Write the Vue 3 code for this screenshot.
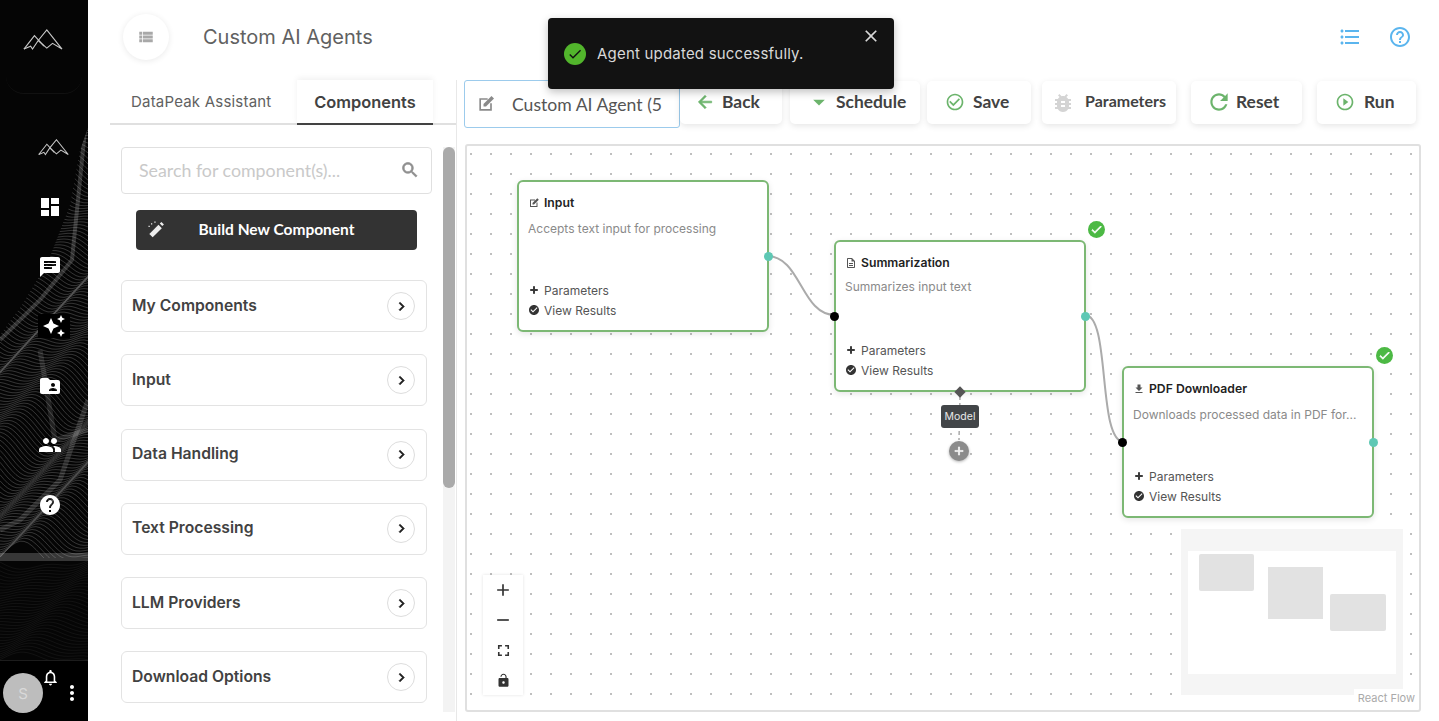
<script setup>
const icons = {
  dashboard: "M3 13h8V3H3v10zm0 8h8v-6H3v6zm10 0h8V11h-8v10zm0-18v6h8V3h-8z",
  chat: "M20 2H4c-1.1 0-2 .9-2 2v18l4-4h14c1.1 0 2-.9 2-2V4c0-1.1-.9-2-2-2zM6 9h12v2H6V9zm8 5H6v-2h8v2zm4-6H6V6h12v2z",
  stars: "M19 9l1.25-2.75L23 5l-2.75-1.25L19 1l-1.25 2.75L15 5l2.75 1.25L19 9zm-7.5.5L9 4 6.5 9.5 1 12l5.5 2.5L9 20l2.5-5.5L17 12l-5.5-2.5zM19 15l-1.25 2.75L15 19l2.75 1.25L19 23l1.25-2.75L23 19l-2.75-1.25L19 15z",
  folder: "M20 6h-8l-2-2H4c-1.1 0-1.99.9-1.99 2L2 18c0 1.1.9 2 2 2h16c1.1 0 2-.9 2-2V8c0-1.1-.9-2-2-2zm-5 3c1.1 0 2 .9 2 2s-.9 2-2 2-2-.9-2-2 .9-2 2-2zm4 8h-8v-1c0-1.33 2.67-2 4-2s4 .67 4 2v1z",
  people: "M16 11c1.66 0 2.99-1.34 2.99-3S17.66 5 16 5c-1.66 0-3 1.34-3 3s1.34 3 3 3zm-8 0c1.66 0 2.99-1.34 2.99-3S9.66 5 8 5C6.34 5 5 6.34 5 8s1.34 3 3 3zm0 2c-2.33 0-7 1.17-7 3.5V19h14v-2.5c0-2.33-4.67-3.5-7-3.5zm8 0c-.29 0-.62.02-.97.05 1.16.84 1.97 1.97 1.97 3.45V19h6v-2.5c0-2.33-4.67-3.5-7-3.5z",
  help: "M12 2C6.48 2 2 6.48 2 12s4.48 10 10 10 10-4.48 10-10S17.52 2 12 2zm1 17h-2v-2h2v2zm2.07-7.75l-.9.92C13.45 12.9 13 13.5 13 15h-2v-.5c0-1.1.45-2.1 1.17-2.83l1.24-1.26c.37-.36.59-.86.59-1.41 0-1.1-.9-2-2-2s-2 .9-2 2H8c0-2.21 1.79-4 4-4s4 1.79 4 4c0 .88-.36 1.68-.93 2.25z",
  helpOutline: "M11 18h2v-2h-2v2zm1-16C6.48 2 2 6.48 2 12s4.48 10 10 10 10-4.48 10-10S17.52 2 12 2zm0 18c-4.41 0-8-3.59-8-8s3.59-8 8-8 8 3.59 8 8-3.59 8-8 8zm0-14c-2.21 0-4 1.79-4 4h2c0-1.1.9-2 2-2s2 .9 2 2c0 2-3 1.75-3 5h2c0-2.25 3-2.5 3-5 0-2.21-1.79-4-4-4z",
  bullets: "M4 10.5c-.83 0-1.5.67-1.5 1.5s.67 1.5 1.5 1.5 1.5-.67 1.5-1.5-.67-1.5-1.5-1.5zm0-6c-.83 0-1.5.67-1.5 1.5S3.17 7.5 4 7.5 5.5 6.83 5.5 6 4.83 4.5 4 4.5zm0 12c-.83 0-1.5.68-1.5 1.5s.68 1.5 1.5 1.5 1.5-.68 1.5-1.5-.67-1.5-1.5-1.5zM7 19h14v-2H7v2zm0-6h14v-2H7v2zm0-8v2h14V5H7z",
  viewList: "M3 14h4v-4H3v4zm0 5h4v-4H3v4zM3 9h4V5H3v4zm5 5h13v-4H8v4zm0 5h13v-4H8v4zM8 5v4h13V5H8z",
  edit: "M4 5h10v2H6v11h11v-7h2v9H4zM18.6 2.4l3 3L12 15H9v-3z",
  back: "M20 11H7.83l5.59-5.59L12 4l-8 8 8 8 1.41-1.41L7.83 13H20v-2z",
  drop: "M7 10l5 5 5-5z",
  saveCheck: "M16.59 7.58L10 14.17l-3.59-3.58L5 12l5 5 8-8zM12 2C6.48 2 2 6.48 2 12s4.48 10 10 10 10-4.48 10-10S17.52 2 12 2zm0 18c-4.42 0-8-3.58-8-8s3.58-8 8-8 8 3.58 8 8-3.58 8-8 8z",
  bug: "M20 8h-2.81c-.45-.78-1.07-1.45-1.82-1.96L17 4.41 15.59 3l-2.17 2.17C12.96 5.06 12.49 5 12 5c-.49 0-.96.06-1.41.17L8.41 3 7 4.41l1.62 1.63C7.88 6.55 7.26 7.22 6.81 8H4v2h2.09c-.05.33-.09.66-.09 1v1H4v2h2v1c0 .34.04.67.09 1H4v2h2.81c1.04 1.79 2.97 3 5.19 3s4.15-1.21 5.19-3H20v-2h-2.09c.05-.33.09-.66.09-1v-1h2v-2h-2v-1c0-.34-.04-.67-.09-1H20V8zm-6 8h-4v-2h4v2zm0-4h-4v-2h4v2z",
  reset: "M17.65 6.35C16.2 4.9 14.21 4 12 4c-4.42 0-7.99 3.58-7.99 8s3.57 8 7.99 8c3.73 0 6.84-2.55 7.73-6h-2.08c-.82 2.33-3.04 4-5.65 4-3.31 0-6-2.69-6-6s2.69-6 6-6c1.66 0 3.14.69 4.22 1.78L13 11h7V4l-2.35 2.35z",
  play: "M10 16.5l6-4.5-6-4.5v9zM12 2C6.48 2 2 6.48 2 12s4.48 10 10 10 10-4.48 10-10S17.52 2 12 2zm0 18c-4.41 0-8-3.59-8-8s3.59-8 8-8 8 3.59 8 8-3.59 8-8 8z",
  search: "M15.5 14h-.79l-.28-.27C15.41 12.59 16 11.11 16 9.5 16 5.91 13.09 3 9.5 3S3 5.91 3 9.5 5.91 16 9.5 16c1.61 0 3.09-.59 4.23-1.57l.27.28v.79l5 4.99L20.49 19l-4.99-5zm-6 0C7.01 14 5 11.99 5 9.5S7.01 5 9.5 5 14 7.01 14 9.5 11.99 14 9.5 14z",
  chevron: "M10 6L8.59 7.41 13.17 12l-4.58 4.59L10 18l6-6z",
  close: "M19 6.41L17.59 5 12 10.59 6.41 5 5 6.41 10.59 12 5 17.59 6.41 19 12 13.41 17.59 19 19 17.59 13.41 12z",
  check: "M9 16.17L4.83 12l-1.42 1.41L9 19 21 7l-1.41-1.41z",
  add: "M19 13h-6v6h-2v-6H5v-2h6V5h2v6h6v2z",
  remove: "M19 13H5v-2h14v2z",
  fullscreen: "M7 14H5v5h5v-2H7v-3zm-2-4h2V7h3V5H5v5zm12 7h-3v2h5v-5h-2v3zM14 5v2h3v3h2V5h-5z",
  lock: "M18 8h-1V6c0-2.76-2.24-5-5-5S7 3.24 7 6h1.9c0-1.71 1.39-3.1 3.1-3.1 1.71 0 3.1 1.39 3.1 3.1v2H6c-1.1 0-2 .9-2 2v10c0 1.1.9 2 2 2h12c1.1 0 2-.9 2-2V10c0-1.1-.9-2-2-2zm-6 9c-1.1 0-2-.9-2-2s.9-2 2-2 2 .9 2 2-.9 2-2 2z",
  bell: "M12 22c1.1 0 2-.9 2-2h-4c0 1.1.9 2 2 2zm6-6v-5c0-3.07-1.63-5.64-4.5-6.32V4c0-.83-.67-1.5-1.5-1.5s-1.5.67-1.5 1.5v.68C7.64 5.36 6 7.92 6 11v5l-2 2v1h16v-1l-2-2zm-2 1H8v-6c0-2.48 1.51-4.5 4-4.5s4 2.02 4 4.5v6z",
  more: "M12 8c1.1 0 2-.9 2-2s-.9-2-2-2-2 .9-2 2 .9 2 2 2zm0 2c-1.1 0-2 .9-2 2s.9 2 2 2 2-.9 2-2-.9-2-2-2zm0 6c-1.1 0-2 .9-2 2s.9 2 2 2 2-.9 2-2-.9-2-2-2z",
  download: "M5 20h14v-2H5v2zM19 9h-4V3H9v6H5l7 7 7-7z",
  doc: "M8 16h8v2H8zm0-4h8v2H8zm6-10H6c-1.1 0-2 .9-2 2v16c0 1.1.89 2 1.99 2H18c1.1 0 2-.9 2-2V8l-6-6zm4 18H6V4h7v5h5v11z",
  verified: "M12 2C6.48 2 2 6.48 2 12s4.48 10 10 10 10-4.48 10-10S17.52 2 12 2zm-2 15l-5-5 1.41-1.41L10 14.17l7.59-7.59L19 8l-9 9z",
};

const navItems = [
  { key: "dashboard", path: icons.dashboard },
  { key: "chat", path: icons.chat },
  { key: "stars", path: icons.stars, active: true },
  { key: "folder", path: icons.folder },
  { key: "people", path: icons.people },
  { key: "help", path: icons.help },
];

const groups = ["My Components", "Input", "Data Handling", "Text Processing", "LLM Providers", "Download Options"];

const actions = [
  { label: "Back", icon: icons.back, cls: "act-back" },
  { label: "Schedule", icon: icons.drop, cls: "act-schedule" },
  { label: "Save", icon: icons.saveCheck, cls: "act-save" },
  { label: "Parameters", icon: icons.bug, cls: "act-params" },
  { label: "Reset", icon: icons.reset, cls: "act-reset" },
  { label: "Run", icon: icons.play, cls: "act-run" },
];

const nodes = [
  { title: "Input", desc: "Accepts text input for processing", icon: icons.edit, cls: "node-input" },
  { title: "Summarization", desc: "Summarizes input text", icon: icons.doc, cls: "node-summary", done: true, model: true },
  { title: "PDF Downloader", desc: "Downloads processed data in PDF for...", icon: icons.download, cls: "node-pdf", done: true },
];

// contour lines for the sidebar artwork
const waveLine = (i, from, step, amp) => {
  const base = from + i * step;
  let d = "";
  for (let x = 0; x <= 88; x += 4) {
    const y = base + amp * Math.sin(x / 24 + i * 0.11) + (amp / 2) * Math.sin(x / 10 + i * 0.27);
    d += (x === 0 ? "M" : "L") + x + " " + y.toFixed(1) + " ";
  }
  return d;
};
const upperWaves = Array.from({ length: 150 }, (_, i) => waveLine(i, 130, 2.9, 14));
const lowerWaves = Array.from({ length: 34 }, (_, i) => waveLine(i, 562, 3, 6));
</script>

<template>
  <div class="app">
    <aside class="sidebar">
      <svg class="art" viewBox="0 0 88 721" width="88" height="721" aria-hidden="true">
        <defs>
          <clipPath id="peak">
            <polygon points="0,335 22,305 48,262 70,205 80,150 88,128 88,558 0,558" />
          </clipPath>
        </defs>
        <g clip-path="url(#peak)" fill="none" stroke="#fff">
          <g stroke-width="0.6" opacity="0.32">
            <path v-for="(d, i) in upperWaves" :key="i" :d="d" />
          </g>
          <path d="M85 130 L72 260 L40 300 L0 340" stroke-width="4" opacity="0.18" />
          <path d="M40 350 L55 440 L88 430" stroke-width="5" opacity="0.12" />
          <path d="M88 400 L60 480 L20 520 L0 530" stroke-width="5" opacity="0.14" />
        </g>
        <rect x="0" y="553" width="88" height="8" fill="#fff" opacity="0.2" />
        <g fill="none" stroke="#fff" stroke-width="0.5" opacity="0.1">
          <path v-for="(d, i) in lowerWaves" :key="i" :d="d" />
        </g>
      </svg>

      <div class="brand">
        <svg class="logo" viewBox="0 0 42 23" width="40" height="22" fill="none" stroke="#c8c8c8" stroke-width="1.200">
          <path d="M1 21L12 7L22 18" />
          <path d="M1 21L8 18L10 21L16 12L25 1L41 21L31 15L25 20L16 12" />
        </svg>
      </div>

      <nav class="nav">
        <div class="nav-item">
          <svg viewBox="0 0 42 23" width="31" height="17" fill="none" stroke="#c8c8c8" stroke-width="1.400">
            <path d="M1 21L12 7L22 18" />
            <path d="M1 21L8 18L10 21L16 12L25 1L41 21L31 15L25 20L16 12" />
          </svg>
        </div>
        <div v-for="item in navItems" :key="item.key" class="nav-item">
          <span :class="['nav-icon', { 'nav-icon-active': item.active }]">
            <svg viewBox="0 0 24 24" width="24" height="24"><path :d="item.path" fill="#fff" /></svg>
          </span>
        </div>
      </nav>

      <div class="user">
        <div class="avatar">S</div>
        <svg class="bell" viewBox="0 0 24 24" width="19" height="19"><path :d="icons.bell" fill="#fff" /></svg>
        <svg class="more" viewBox="0 0 24 24" width="24" height="24"><path :d="icons.more" fill="#fff" /></svg>
      </div>
    </aside>

    <main class="main">
      <header class="header">
        <button class="menu-btn">
          <svg viewBox="0 0 24 24" width="18" height="18"><path :d="icons.viewList" fill="#a8a8a8" /></svg>
        </button>
        <h1 class="page-title">Custom AI Agents</h1>
        <div class="header-icons">
          <svg viewBox="0 0 24 24" width="24" height="24"><path :d="icons.bullets" fill="#5bb5ee" /></svg>
          <svg viewBox="0 0 24 24" width="24" height="24"><path :d="icons.helpOutline" fill="#5bb5ee" /></svg>
        </div>
      </header>

      <div class="content">
        <section class="panel">
          <div class="tabs">
            <div class="tab">DataPeak Assistant</div>
            <div class="tab tab-active">Components</div>
          </div>
          <div class="panel-body">
            <div class="panel-list">
              <div class="search">
                <span>Search for component(s)...</span>
                <svg viewBox="0 0 24 24" width="20" height="20"><path :d="icons.search" fill="#8f8f8f" stroke="#8f8f8f" stroke-width="0.8" /></svg>
              </div>
              <button class="build-btn">
                <svg class="wand" viewBox="0 0 24 24" width="20" height="20">
                  <path d="M8 22l-4-4L15 7l4 4z" fill="#eee" />
                  <path d="M16.5 5.5l2-2 3 3-2 2z" fill="#eee" />
                  <path d="M6 5h1.5v1.5H6zM10 3h1.500v1.500H10zM3 8h1.500v1.500H3z" fill="#eee" />
                </svg>
                <span>Build New Component</span>
              </button>
              <div v-for="group in groups" :key="group" class="group">
                <span class="group-name">{{ group }}</span>
                <span class="group-arrow">
                  <svg viewBox="0 0 24 24" width="17" height="17"><path :d="icons.chevron" fill="#222" stroke="#222" stroke-width="1" /></svg>
                </span>
              </div>
            </div>
            <div class="scroll-track"><div class="scroll-thumb"></div></div>
          </div>
        </section>

        <section class="editor">
          <div class="toolbar">
            <div class="name-field">
              <svg viewBox="0 0 24 24" width="20" height="20"><path :d="icons.edit" fill="#8a8a8a" /></svg>
              <span>Custom AI Agent (5</span>
            </div>
            <button v-for="action in actions" :key="action.label" :class="['action', action.cls]">
              <svg viewBox="0 0 24 24" width="20" height="20"><path :d="action.icon" /></svg>
              <span>{{ action.label }}</span>
            </button>
          </div>

          <div class="canvas">
            <svg class="edges" width="952" height="564" fill="none" aria-hidden="true">
              <path d="M300 110C334 110 334 169 368 169" stroke="#ababab" stroke-width="2" />
              <path d="M618 169C644 169 630 296 657 296" stroke="#ababab" stroke-width="2" />
              <path d="M493 250L492 294" stroke="#aaa" stroke-width="1.500" stroke-dasharray="4 3" />
            </svg>

            <div v-for="node in nodes" :key="node.title" :class="['node', node.cls]">
              <div class="node-title">
                <svg viewBox="0 0 24 24" width="12" height="12"><path :d="node.icon" fill="#555" /></svg>
                <span>{{ node.title }}</span>
              </div>
              <div class="node-desc">{{ node.desc }}</div>
              <div class="node-links">
                <div class="node-link">
                  <svg viewBox="0 0 24 24" width="12" height="12"><path :d="icons.add" fill="#222" stroke="#222" stroke-width="1.500" /></svg>
                  <span>Parameters</span>
                </div>
                <div class="node-link">
                  <svg viewBox="0 0 24 24" width="12" height="12"><path :d="icons.verified" fill="#333" /></svg>
                  <span>View Results</span>
                </div>
              </div>
              <span v-if="node.cls !== 'node-input'" class="handle handle-in"></span>
              <span class="handle handle-out"></span>
              <span v-if="node.model" class="handle-model"></span>
              <span v-if="node.done" class="done-badge">
                <svg viewBox="0 0 24 24" width="13" height="13"><path :d="icons.check" fill="#fff" stroke="#fff" stroke-width="1.500" /></svg>
              </span>
            </div>

            <div class="model-tag">Model</div>
            <div class="model-add">
              <svg viewBox="0 0 24 24" width="14" height="14"><path :d="icons.add" fill="#fff" stroke="#fff" /></svg>
            </div>

            <div class="controls">
              <button class="control"><svg viewBox="0 0 24 24" width="20" height="20"><path :d="icons.add" /></svg></button>
              <button class="control"><svg viewBox="0 0 24 24" width="20" height="20"><path :d="icons.remove" /></svg></button>
              <button class="control"><svg viewBox="0 0 24 24" width="19" height="19"><path :d="icons.fullscreen" /></svg></button>
              <button class="control"><svg viewBox="0 0 24 24" width="15" height="15"><path :d="icons.lock" /></svg></button>
            </div>

            <svg class="minimap" viewBox="0 0 222 166" width="222" height="166" aria-hidden="true">
              <rect width="222" height="166" fill="#f5f5f5" />
              <rect x="7" y="22" width="208" height="123" fill="#fff" />
              <rect x="18" y="25" width="55" height="37" rx="2" fill="#e2e2e2" />
              <rect x="87" y="38" width="55" height="52" fill="#e2e2e2" />
              <rect x="149" y="65" width="56" height="37" rx="2" fill="#e2e2e2" />
            </svg>
            <div class="attribution">React Flow</div>
          </div>
        </section>
      </div>
    </main>

    <div class="toast">
      <span class="toast-check">
        <svg viewBox="0 0 24 24" width="16" height="16"><path :d="icons.check" fill="#111" /></svg>
      </span>
      <span class="toast-text">Agent updated successfully.</span>
      <svg class="toast-close" viewBox="0 0 24 24" width="20" height="20"><path :d="icons.close" fill="#d8d8d8" /></svg>
    </div>
  </div>
</template>

<style>
html,
body {
  margin: 0;
  background: #fff;
}
</style>

<style scoped>
* {
  box-sizing: border-box;
}

.app {
  position: relative;
  display: flex;
  width: 1439px;
  height: 721px;
  overflow: hidden;
  font-family: Inter, "Liberation Sans", sans-serif;
  color: #424242;
}

/* sidebar */
.sidebar {
  position: relative;
  display: flex;
  flex-direction: column;
  flex: none;
  width: 88px;
  background: #050505;
}

.art {
  position: absolute;
  top: 0;
  left: 0;
}

.brand {
  position: relative;
  display: flex;
  justify-content: center;
  height: 94px;
  margin: 0 6px;
  padding-top: 29px;
  border-bottom: 1px solid #111;
  border-radius: 0 0 18px 18px;
}

.logo {
  margin-left: -2px;
}

.nav {
  position: relative;
  margin-top: 24px;
}

.nav-item {
  display: flex;
  align-items: center;
  height: 59.500px;
  padding-left: 38px;
}

.nav-icon {
  display: flex;
  align-items: center;
  width: 32px;
  height: 24px;
}

.nav-icon-active {
  justify-content: center;
  background: #000;
}

.user {
  position: relative;
  display: flex;
  align-items: flex-start;
  height: 61px;
  margin-top: auto;
  padding: 8px 0 0 3px;
  background: #000;
  border-top: 1px solid #1c1c1c;
}

.avatar {
  display: flex;
  align-items: center;
  justify-content: center;
  width: 40px;
  height: 40px;
  margin-top: 4px;
  border-radius: 50%;
  background: #bdbdbd;
  color: #d9d9d9;
  font-size: 15px;
}

.bell {
  margin: -1px 0 0 -2px;
}

.more {
  margin: 12px 0 0 0;
}

/* header */
.main {
  flex: 1;
  display: flex;
  flex-direction: column;
  min-width: 0;
}

.header {
  display: flex;
  align-items: flex-start;
  flex: none;
  height: 80px;
  padding: 14px 27px 0 35px;
}

.menu-btn {
  display: flex;
  align-items: center;
  justify-content: center;
  width: 46px;
  height: 46px;
  padding: 0;
  border: none;
  border-radius: 50%;
  background: #fff;
  box-shadow: 0 1px 6px rgba(0, 0, 0, 0.09);
}

.page-title {
  margin: 0 0 0 34px;
  font-size: 20px;
  font-weight: 400;
  line-height: 46px;
  color: #616161;
}

.header-icons {
  display: flex;
  gap: 26px;
  margin-left: auto;
  padding-top: 11px;
}

.content {
  flex: 1;
  display: flex;
  min-height: 0;
}

/* left panel */
.panel {
  display: flex;
  flex-direction: column;
  flex: none;
  width: 347px;
  margin-left: 22px;
  border-right: 1px solid #e8e8e8;
}

.tabs {
  display: flex;
  flex: none;
  height: 45px;
  border-bottom: 2px solid #e0e0e0;
}

.tab {
  width: 187px;
  padding: 12px 0 0 21px;
  font-size: 15px;
  letter-spacing: 0.2px;
  color: #616161;
}

.tab-active {
  width: 136px;
  height: 45px;
  padding: 12px 0 0;
  border-bottom: 2px solid #424242;
  box-shadow: 0 -2px 6px rgba(0, 0, 0, 0.06);
  text-align: center;
  font-size: 16.400px;
  font-weight: 600;
  letter-spacing: 0;
  color: #424242;
}

.panel-body {
  flex: 1;
  display: flex;
  min-height: 0;
  padding: 22px 0 0 11px;
}

.panel-list {
  width: 311px;
  overflow: hidden;
}

.search {
  display: flex;
  align-items: center;
  justify-content: space-between;
  height: 47px;
  padding: 0 11px 1px 17px;
  border: 1px solid #e0e0e0;
  border-radius: 4px;
  font-family: Lato, sans-serif;
  font-size: 17.800px;
  color: #c9c9c9;
}

.build-btn {
  position: relative;
  display: flex;
  align-items: center;
  justify-content: center;
  width: 281px;
  height: 40px;
  margin: 16px 0 30px 15px;
  padding: 0 0 3px;
  border: none;
  border-radius: 4px;
  background: #333;
  color: #fff;
  font-family: Lato, sans-serif;
  font-size: 15.500px;
  font-weight: 700;
}

.wand {
  position: absolute;
  left: 10px;
  top: 9px;
}

.group {
  display: flex;
  align-items: center;
  justify-content: space-between;
  width: 306px;
  height: 52px;
  margin-bottom: 22.300px;
  padding: 0 11px 0 10px;
  border: 1px solid #e3e3e3;
  border-radius: 6px;
  font-size: 15.700px;
  font-weight: 600;
  color: #424242;
}

.group-name {
  margin-top: -2px;
}

.group-arrow {
  display: flex;
  align-items: center;
  justify-content: center;
  width: 28px;
  height: 28px;
  border: 1px solid #ddd;
  border-radius: 50%;
}

.scroll-track {
  width: 12px;
  margin: 0 0 9px 11px;
  background: #f3f3f3;
}

.scroll-thumb {
  height: 341px;
  border-radius: 6px;
  background: #aaa;
}

/* toolbar */
.editor {
  flex: 1;
  min-width: 0;
}

.toolbar {
  display: flex;
  align-items: flex-start;
  height: 64px;
  padding-left: 7px;
  font-family: Lato, sans-serif;
}

.name-field {
  display: flex;
  align-items: center;
  gap: 16px;
  flex: none;
  width: 216px;
  height: 48px;
  padding-left: 11px;
  border: 1px solid #9ccbec;
  border-radius: 3px;
  font-size: 17.600px;
  color: #555;
  white-space: nowrap;
  overflow: hidden;
}

.action {
  display: flex;
  align-items: center;
  flex: none;
  height: 43px;
  margin-top: 1px;
  padding: 0 0 2px;
  border: none;
  border-radius: 5px;
  background: #fff;
  box-shadow: 0 2px 6px rgba(0, 0, 0, 0.1);
  font-family: Lato, sans-serif;
  font-size: 17.400px;
  font-weight: 700;
  color: #424242;
}

.action svg {
  fill: #6cb46c;
}

.act-back {
  width: 102px;
  padding-left: 15px;
  gap: 7px;
}

.act-back svg {
  stroke: #6cb46c;
  stroke-width: 0.8;
}

.act-schedule {
  width: 130px;
  margin-left: 8px;
  padding-left: 15px;
  gap: 3px;
}

.act-schedule svg {
  width: 28px;
  height: 28px;
}

.act-save {
  width: 104px;
  margin-left: 7px;
  padding-left: 18px;
  gap: 8px;
}

.act-params {
  width: 134px;
  margin-left: 11px;
  padding-left: 9px;
  padding-bottom: 4px;
  gap: 10px;
  font-size: 16px;
}

.act-params svg {
  fill: #d4d4d4;
  width: 24px;
  height: 24px;
  margin-top: 4px;
}

.act-reset {
  width: 111px;
  margin-left: 15px;
  padding-left: 15px;
  gap: 4px;
}

.act-reset svg {
  width: 26px;
  height: 26px;
}

.act-run {
  width: 99px;
  margin-left: 15px;
  padding-left: 18px;
  gap: 9px;
}

/* canvas */
.canvas {
  position: relative;
  width: 956px;
  height: 568px;
  margin-left: 8px;
  border: 2px solid #e0e0e0;
  border-radius: 3px;
  background-image: radial-gradient(circle, #bdbdbd 0.7px, transparent 0.9px);
  background-size: 20px 20px;
  background-position: -6px -2px;
}

.edges {
  position: absolute;
  top: 0;
  left: 0;
}

.node {
  position: absolute;
  display: flex;
  flex-direction: column;
  width: 252px;
  height: 152px;
  padding: 13px 9px 12px;
  border: 2px solid #7cb874;
  border-radius: 6px;
  background: #fff;
  box-shadow: 0 2px 6px rgba(0, 0, 0, 0.1);
}

.node-input {
  left: 50px;
  top: 34px;
}

.node-summary {
  left: 367px;
  top: 94px;
}

.node-summary .node-desc {
  margin-top: 9px;
}

.node-pdf {
  left: 655px;
  top: 220px;
}

.node-title {
  display: flex;
  align-items: center;
  gap: 4px;
  font-size: 12.200px;
  font-weight: 600;
  line-height: 15px;
  color: #222;
}

.node-desc {
  margin-top: 11px;
  font-size: 12px;
  line-height: 15px;
  color: #8a8a8a;
  white-space: nowrap;
}

.node-links {
  display: flex;
  flex-direction: column;
  gap: 4.500px;
  margin-top: auto;
}

.node-link {
  display: flex;
  align-items: center;
  gap: 4px;
  font-size: 12px;
  line-height: 15.500px;
  color: #555;
}

.handle {
  position: absolute;
  top: 50%;
  width: 9px;
  height: 9px;
  margin-top: -4.500px;
  border-radius: 50%;
}

.handle-in {
  left: -6px;
  background: #000;
}

.handle-out {
  right: -6px;
  background: #5ec8b4;
}

.handle-model {
  position: absolute;
  left: 50%;
  bottom: -6px;
  width: 8px;
  height: 8px;
  margin-left: -4px;
  background: #555;
  transform: rotate(45deg);
}

.done-badge {
  position: absolute;
  top: -21px;
  right: -21px;
  display: flex;
  align-items: center;
  justify-content: center;
  width: 17px;
  height: 17px;
  border-radius: 50%;
  background: #4cb944;
}

.model-tag {
  position: absolute;
  left: 474px;
  top: 259px;
  width: 38px;
  height: 23px;
  border-radius: 3px;
  background: #424548;
  color: #e8e8e8;
  font-size: 10.500px;
  line-height: 23px;
  text-align: center;
}

.model-add {
  position: absolute;
  left: 482px;
  top: 295px;
  display: flex;
  align-items: center;
  justify-content: center;
  width: 20px;
  height: 20px;
  border-radius: 50%;
  background: #8b8b8b;
  box-shadow: 0 1px 3px rgba(0, 0, 0, 0.3);
}

.controls {
  position: absolute;
  left: 16px;
  bottom: 15px;
  display: flex;
  flex-direction: column;
  width: 40px;
  height: 120px;
  background: #fff;
  box-shadow: 0 0 3px rgba(0, 0, 0, 0.12);
}

.control {
  display: flex;
  align-items: center;
  justify-content: center;
  height: 30px;
  padding: 0;
  border: none;
  background: transparent;
}

.control svg {
  fill: #333;
}

.minimap {
  position: absolute;
  right: 16px;
  bottom: 15px;
}

.attribution {
  position: absolute;
  right: 0;
  bottom: 3px;
  padding: 2px 4px;
  background: #fff;
  color: #aaa;
  font-size: 11px;
}

/* toast */
.toast {
  position: absolute;
  left: 548px;
  top: 18px;
  display: flex;
  align-items: center;
  width: 346px;
  height: 71px;
  padding-left: 16px;
  border-radius: 4px;
  background: #121212;
  box-shadow: 0 3px 8px rgba(0, 0, 0, 0.25);
}

.toast-check {
  display: flex;
  align-items: center;
  justify-content: center;
  width: 22px;
  height: 22px;
  border-radius: 50%;
  background: #52b52c;
}

.toast-text {
  margin-left: 11px;
  font-size: 15px;
  letter-spacing: 0.2px;
  color: #d8d8d8;
}

.toast-close {
  position: absolute;
  top: 8px;
  right: 13px;
}
</style>
